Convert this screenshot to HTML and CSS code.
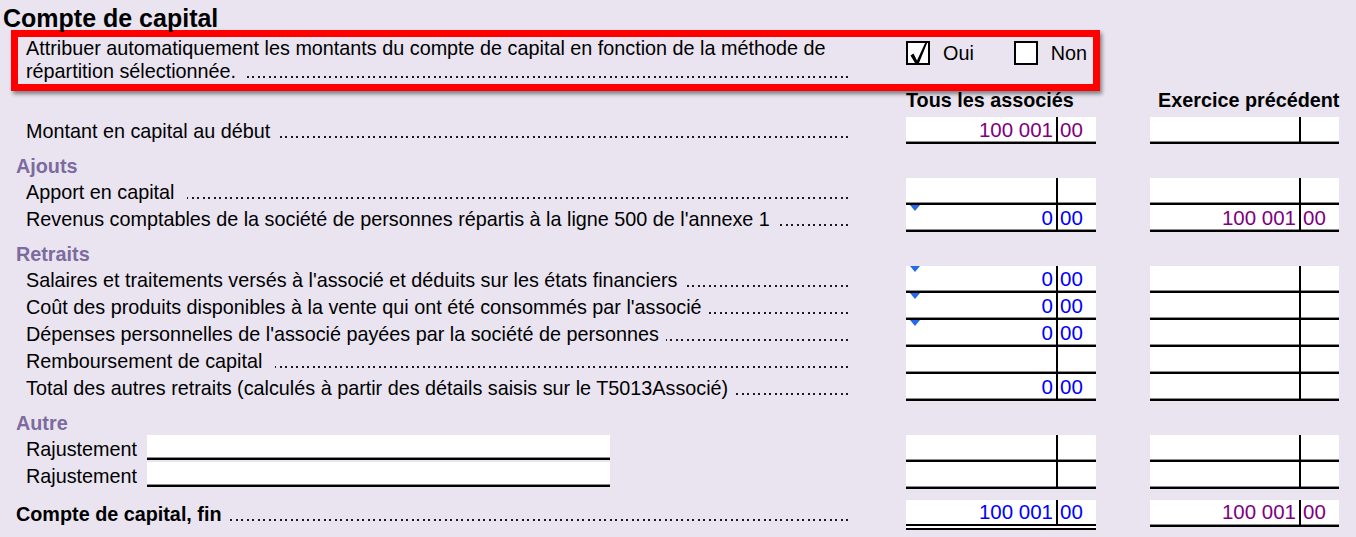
FILE: index.html
```html
<!DOCTYPE html>
<html lang="fr">
<head>
<meta charset="utf-8">
<title>Compte de capital</title>
<link rel="stylesheet" href="styles.css">
</head>
<body>
<div class="page">
  <h1 class="title">Compte de capital</h1>

  <div class="hl">
    <div class="hl-text">
      <div class="hl-line">Attribuer automatiquement les montants du compte de capital en fonction de la méthode de</div>
      <div class="lead hl-line"><span class="t">répartition sélectionnée.</span><span class="dots"></span></div>
    </div>
    <div class="opts">
      <span class="cb"><svg class="chk" viewBox="0 0 20 24" width="20" height="24"><path d="M2.5 13.5 L5.5 11.5 L9 18.5 L18 -1 L19.6 -0.2 L10.2 23 L8.2 23 Z" fill="#000"/></svg></span>
      <span class="opt-l">Oui</span>
      <span class="cb cb-non"></span>
      <span class="opt-l">Non</span>
    </div>
  </div>

  <div class="row head">
    <div class="lbl"></div>
    <div class="ch c1">Tous les associés</div>
    <div class="ch c2">Exercice précédent</div>
  </div>

  <div class="row">
    <div class="lbl lead"><span class="t">Montant en capital au début</span><span class="dots"></span></div>
    <div class="fld c1"><span class="dol purple">100 001</span><span class="cts purple">00</span></div>
    <div class="fld c2"><span class="dol"></span><span class="cts"></span></div>
  </div>

  <div class="sec">Ajouts</div>

  <div class="row">
    <div class="lbl lead"><span class="t">Apport en capital&nbsp;</span><span class="dots"></span></div>
    <div class="fld c1"><span class="dol"></span><span class="cts"></span></div>
    <div class="fld c2"><span class="dol"></span><span class="cts"></span></div>
  </div>
  <div class="row">
    <div class="lbl lead"><span class="t">Revenus comptables de la société de personnes répartis à la ligne 500 de l'annexe 1</span><span class="dots"></span></div>
    <div class="fld c1"><span class="tri"></span><span class="dol blue">0</span><span class="cts blue">00</span></div>
    <div class="fld c2"><span class="dol purple">100 001</span><span class="cts purple">00</span></div>
  </div>

  <div class="sec">Retraits</div>

  <div class="row">
    <div class="lbl lead"><span class="t">Salaires et traitements versés à l'associé et déduits sur les états financiers</span><span class="dots"></span></div>
    <div class="fld c1"><span class="tri"></span><span class="dol blue">0</span><span class="cts blue">00</span></div>
    <div class="fld c2"><span class="dol"></span><span class="cts"></span></div>
  </div>
  <div class="row">
    <div class="lbl lead"><span class="t">Coût des produits disponibles à la vente qui ont été consommés par l'associé</span><span class="dots"></span></div>
    <div class="fld c1"><span class="tri"></span><span class="dol blue">0</span><span class="cts blue">00</span></div>
    <div class="fld c2"><span class="dol"></span><span class="cts"></span></div>
  </div>
  <div class="row">
    <div class="lbl lead"><span class="t">Dépenses personnelles de l'associé payées par la société de personnes</span><span class="dots"></span></div>
    <div class="fld c1"><span class="tri"></span><span class="dol blue">0</span><span class="cts blue">00</span></div>
    <div class="fld c2"><span class="dol"></span><span class="cts"></span></div>
  </div>
  <div class="row">
    <div class="lbl lead"><span class="t">Remboursement de capital&nbsp;</span><span class="dots"></span></div>
    <div class="fld c1"><span class="dol"></span><span class="cts"></span></div>
    <div class="fld c2"><span class="dol"></span><span class="cts"></span></div>
  </div>
  <div class="row">
    <div class="lbl lead"><span class="t">Total des autres retraits (calculés à partir des détails saisis sur le T5013Associé)</span><span class="dots"></span></div>
    <div class="fld c1"><span class="dol blue">0</span><span class="cts blue">00</span></div>
    <div class="fld c2"><span class="dol"></span><span class="cts"></span></div>
  </div>

  <div class="sec">Autre</div>

  <div class="row">
    <div class="lbl adj"><span class="adj-t">Rajustement</span><span class="adj-in"></span></div>
    <div class="fld c1"><span class="dol"></span><span class="cts"></span></div>
    <div class="fld c2"><span class="dol"></span><span class="cts"></span></div>
  </div>
  <div class="row">
    <div class="lbl adj"><span class="adj-t">Rajustement</span><span class="adj-in"></span></div>
    <div class="fld c1"><span class="dol"></span><span class="cts"></span></div>
    <div class="fld c2"><span class="dol"></span><span class="cts"></span></div>
  </div>

  <div class="row total">
    <div class="lbl lead lbl-b"><span class="t">Compte de capital, fin</span><span class="dots"></span></div>
    <div class="fld c1 fld-dbl"><span class="dol blue">100 001</span><span class="cts blue">00</span></div>
    <div class="fld c2 fld-tot"><span class="dol purple">100 001</span><span class="cts purple">00</span></div>
  </div>
</div>
</body>
</html>
```

FILE: styles.css
```css
html, body {
  margin: 0;
  padding: 0;
  background: #e9e4f0;
}
body {
  font-family: "Liberation Sans", Arial, sans-serif;
  font-size: 19.8px;
  color: #000;
}
.page {
  width: 1356px;
  height: 537px;
  overflow: hidden;
}
.title {
  margin: 0;
  padding: 7px 0 0 3px;
  font-size: 25px;
  line-height: 23px;
  font-weight: bold;
  height: 30px;
  box-sizing: border-box;
}

/* highlighted question */
.hl {
  margin-left: 11px;
  width: 1089px;
  height: 61px;
  box-sizing: border-box;
  border: 7px solid #ff0000;
  box-shadow: 2px 3px 4px rgba(0, 0, 0, 0.45);
  display: flex;
  padding-top: 0;
}
.hl-text {
  margin-left: 8px;
  width: 824px;
}
.hl-line {
  line-height: 23px;
  height: 23px;
  white-space: nowrap;
}
.opts {
  margin-left: 56px;
  display: flex;
  align-items: center;
  height: 24px;
  margin-top: 4px;
}
.cb {
  width: 24px;
  height: 24px;
  box-sizing: border-box;
  border: 2px solid #000;
  background: #fff;
  position: relative;
  flex-shrink: 0;
}
.chk {
  position: absolute;
  left: 0;
  top: -1px;
}
.opt-l {
  margin-left: 13px;
  line-height: 24px;
}
.cb-non {
  margin-left: 40px;
}
.cb-non + .opt-l {
  margin-left: 13px;
}

/* leader rows: dotted leader drawn from the right edge */
.lead {
  display: flex;
  align-items: baseline;
}
.lead .t {
  white-space: nowrap;
  flex-shrink: 0;
}
.dots {
  flex: 1;
  min-width: 0;
  height: 2px;
  margin-left: 7px;
  background-image: repeating-linear-gradient(to left, transparent 0 1.6px, #1a1a1a 1.6px 3.8px, transparent 3.8px 5.5px);
}

.row {
  display: flex;
  height: 27px;
}
.lbl {
  width: 824px;
  margin-left: 26px;
  box-sizing: border-box;
  padding-top: 2px;
  line-height: 25px;
  height: 27px;
}
.lbl-b {
  font-weight: bold;
  margin-left: 16px;
  width: 834px;
}

.head {
  height: 26px;
}
.ch {
  font-weight: bold;
  line-height: 18px;
  white-space: nowrap;
}
.ch.c1 {
  margin-left: 56px;
  width: 190px;
}
.ch.c2 {
  margin-left: 62px;
  width: 181px;
}

.sec {
  height: 34px;
  box-sizing: border-box;
  padding: 11px 0 0 16px;
  line-height: 22px;
  font-weight: bold;
  color: #7c6b9f;
}

/* amount fields */
.fld {
  position: relative;
  height: 25px;
  border-bottom: 2px solid #000;
  background: #fff;
  box-shadow: inset 0 -1px 0 #8c8c8c;
  display: grid;
  font-size: 20.5px;
  line-height: 26px;
}
.fld.c1 {
  margin-left: 56px;
  width: 190px;
  grid-template-columns: 152px 36px;
}
.fld.c2 {
  margin-left: 54px;
  width: 189px;
  grid-template-columns: 151px 36px;
}
.dol {
  border-right: 2px solid #000;
  text-align: right;
  padding-right: 3px;
  white-space: nowrap;
}
.cts {
  padding-left: 2px;
}
.purple { color: #800080; }
.blue { color: #0000ff; }

.tri {
  position: absolute;
  left: 4px;
  top: 0;
  width: 0;
  height: 0;
  border-left: 5px solid transparent;
  border-right: 5px solid transparent;
  border-top: 6px solid #2469ee;
}

/* adjustments */
.adj {
  display: flex;
}
.adj-t {
  width: 121px;
  flex-shrink: 0;
}
.adj-in {
  width: 463px;
  height: 23px;
  margin-top: -2px;
  background: #fff;
  border-bottom: 2px solid #000;
  box-shadow: inset 0 -1px 0 #8c8c8c;
}

/* total */
.total {
  margin-top: 11px;
  height: 31px;
}
.fld-dbl {
  height: 24px;
  border-bottom: 6px double #000;
  box-shadow: none;
  line-height: 24px;
}
.fld-tot {
  height: 25px;
  line-height: 24px;
}
```
